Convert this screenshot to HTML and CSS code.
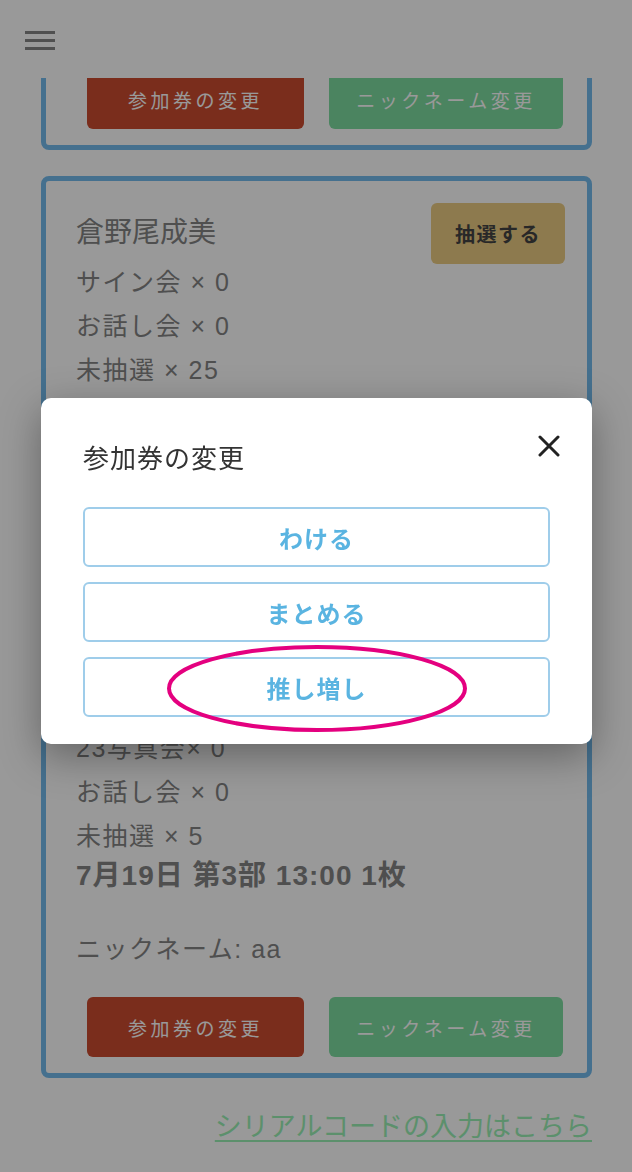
FILE: index.html
```html
<!DOCTYPE html>
<html lang="ja">

<head>
  <meta charset="UTF-8" />
  <meta name="viewport" content="width=device-width, initial-scale=1.0" />
  <title>マイチケット</title>
  <link rel="stylesheet" href="styles.css">
</head>

<body>
  <!-- Fixed header -->
  <header class="site-header">
    <button class="menu-btn" aria-label="メニュー">
      <span></span><span></span><span></span>
    </button>
  </header>

  <!-- Ticket list (scrolled) -->
  <main class="ticket-list">
    <div class="member-card">
      <button class="draw-btn">抽選する</button>
      <p class="member-name">向井地美音</p>
      <div class="entry">
        <p class="count">サイン会 × 0</p>
        <p class="count">お話し会 × 0</p>
        <p class="count">未抽選 × 2</p>
        <p class="date">7月19日 第1部 10:00 2枚</p>
      </div>
      <p class="nickname">ニックネーム: aa</p>
      <div class="actions">
        <button class="btn-change">参加券の変更</button>
        <button class="btn-nick">ニックネーム変更</button>
      </div>
    </div>

    <div class="member-card">
      <button class="draw-btn">抽選する</button>
      <p class="member-name">倉野尾成美</p>
      <div class="entry">
        <p class="count">サイン会 × 0</p>
        <p class="count">お話し会 × 0</p>
        <p class="count">未抽選 × 25</p>
      </div>
      <div class="entry">
        <p class="count">サイン会 × 0</p>
        <p class="count">23写真会× 0</p>
        <p class="count">お話し会 × 0</p>
        <p class="count">未抽選 × 3</p>
        <p class="date">7月19日 第2部 11:30 3枚</p>
      </div>
      <div class="entry">
        <p class="count">サイン会 × 0</p>
        <p class="count">23写真会× 0</p>
        <p class="count">お話し会 × 0</p>
        <p class="count">未抽選 × 5</p>
        <p class="date">7月19日 第3部 13:00 1枚</p>
      </div>
      <p class="nickname">ニックネーム: aa</p>
      <div class="actions">
        <button class="btn-change">参加券の変更</button>
        <button class="btn-nick">ニックネーム変更</button>
      </div>
    </div>

    <a class="serial-link" href="#">シリアルコードの入力はこちら</a>
  </main>

  <!-- Modal -->
  <div class="backdrop"></div>
  <div class="modal">
    <p class="modal-title">参加券の変更</p>
    <button class="modal-close" aria-label="閉じる">
      <svg viewBox="0 0 22 22" width="22" height="22">
        <path d="M2 2 L20 20 M20 2 L2 20" stroke="#222" stroke-width="3" stroke-linecap="round" />
      </svg>
    </button>
    <div class="modal-options">
      <button class="option">わける</button>
      <button class="option">まとめる</button>
      <button class="option">推し増し</button>
    </div>
    <!-- highlight mark -->
    <svg class="mark" viewBox="0 0 300 87" width="300" height="87">
      <ellipse cx="150" cy="43.5" rx="148" ry="41.5" fill="none" stroke="#e4007f" stroke-width="4" />
    </svg>
  </div>
</body>

</html>
```

FILE: styles.css
```css
body {
  margin: 0;
  font-family: "Liberation Sans", "Noto Sans CJK JP", sans-serif;
  background: #fff;
  color: #848484;
}

p {
  margin: 0;
}

button {
  font-family: inherit;
  cursor: pointer;
}

/* Header */
.site-header {
  position: fixed;
  top: 0;
  left: 0;
  right: 0;
  height: 78px;
  background: #fff;
  z-index: 5;
}

.menu-btn {
  margin: 31px 0 0 25px;
  padding: 0;
  border: none;
  background: none;
  display: flex;
  flex-direction: column;
  gap: 5px;
}

.menu-btn span {
  display: block;
  width: 30px;
  height: 3px;
  background: #858585;
}

/* List (page is scrolled down) */
.ticket-list {
  margin-top: -286px;
  padding: 0 40px 40px 41px;
  display: flex;
  flex-direction: column;
  gap: 26px;
}

.member-card {
  border: 5px solid #74bbed;
  border-radius: 8px;
  padding: 21px 22px 16px 30px;
}

.draw-btn {
  float: right;
  width: 134px;
  height: 61px;
  margin-top: 1px;
  border: none;
  border-radius: 6px;
  background: #ebcb82;
  color: #444;
  font-size: 20px;
  font-weight: bold;
  letter-spacing: 1.5px;
}

.member-name {
  font-size: 28px;
  line-height: 40px;
  margin: 11px 0 7px;
}

.count {
  font-size: 25px;
  line-height: 44px;
  letter-spacing: 1.5px;
}

.date {
  font-size: 28px;
  font-weight: bold;
  line-height: 36px;
  letter-spacing: 1px;
}

.entry+.entry {
  margin-top: 39px;
}

.nickname {
  margin-top: 33px;
  font-size: 25px;
  line-height: 44px;
  letter-spacing: 1.5px;
}

.actions {
  display: flex;
  gap: 25px;
  margin: 26px 2px 0 11px;
}

.actions button {
  height: 60px;
  border: none;
  border-radius: 6px;
  color: #fff;
  font-size: 19px;
  letter-spacing: 3.5px;
}

.btn-change {
  width: 217px;
  background: #cb4b2f;
}

.btn-nick {
  flex: 1;
  background: #7ddca0;
}

.serial-link {
  align-self: flex-end;
  margin-top: 3px;
  font-size: 27px;
  line-height: 40px;
  color: #99f0b4;
  text-decoration: underline;
  text-decoration-thickness: 2px;
  text-underline-offset: 4px;
}

/* Modal */
.backdrop {
  position: fixed;
  inset: 0;
  background: rgba(0, 0, 0, 0.4);
  z-index: 10;
}

.modal {
  position: fixed;
  top: 398px;
  left: 41px;
  width: 551px;
  box-sizing: border-box;
  padding: 43px 42px 27px;
  background: #fff;
  border-radius: 10px;
  box-shadow: 0 12px 40px rgba(0, 0, 0, 0.35);
  z-index: 11;
}

.modal-title {
  font-size: 26px;
  line-height: 36px;
  color: #333;
  letter-spacing: 1px;
  margin-bottom: 30px;
}

.modal-close {
  position: absolute;
  top: 37px;
  right: 32px;
  width: 22px;
  height: 22px;
  padding: 0;
  border: none;
  background: none;
}

.modal-close svg {
  display: block;
}

.modal-options {
  display: flex;
  flex-direction: column;
  gap: 15px;
}

.option {
  height: 60px;
  border: 2px solid #9fcdea;
  border-radius: 6px;
  background: #fff;
  color: #5ab4e1;
  font-size: 24px;
  font-weight: bold;
  letter-spacing: 1px;
}

.mark {
  position: absolute;
  left: 126px;
  top: 247px;
  pointer-events: none;
}
```
